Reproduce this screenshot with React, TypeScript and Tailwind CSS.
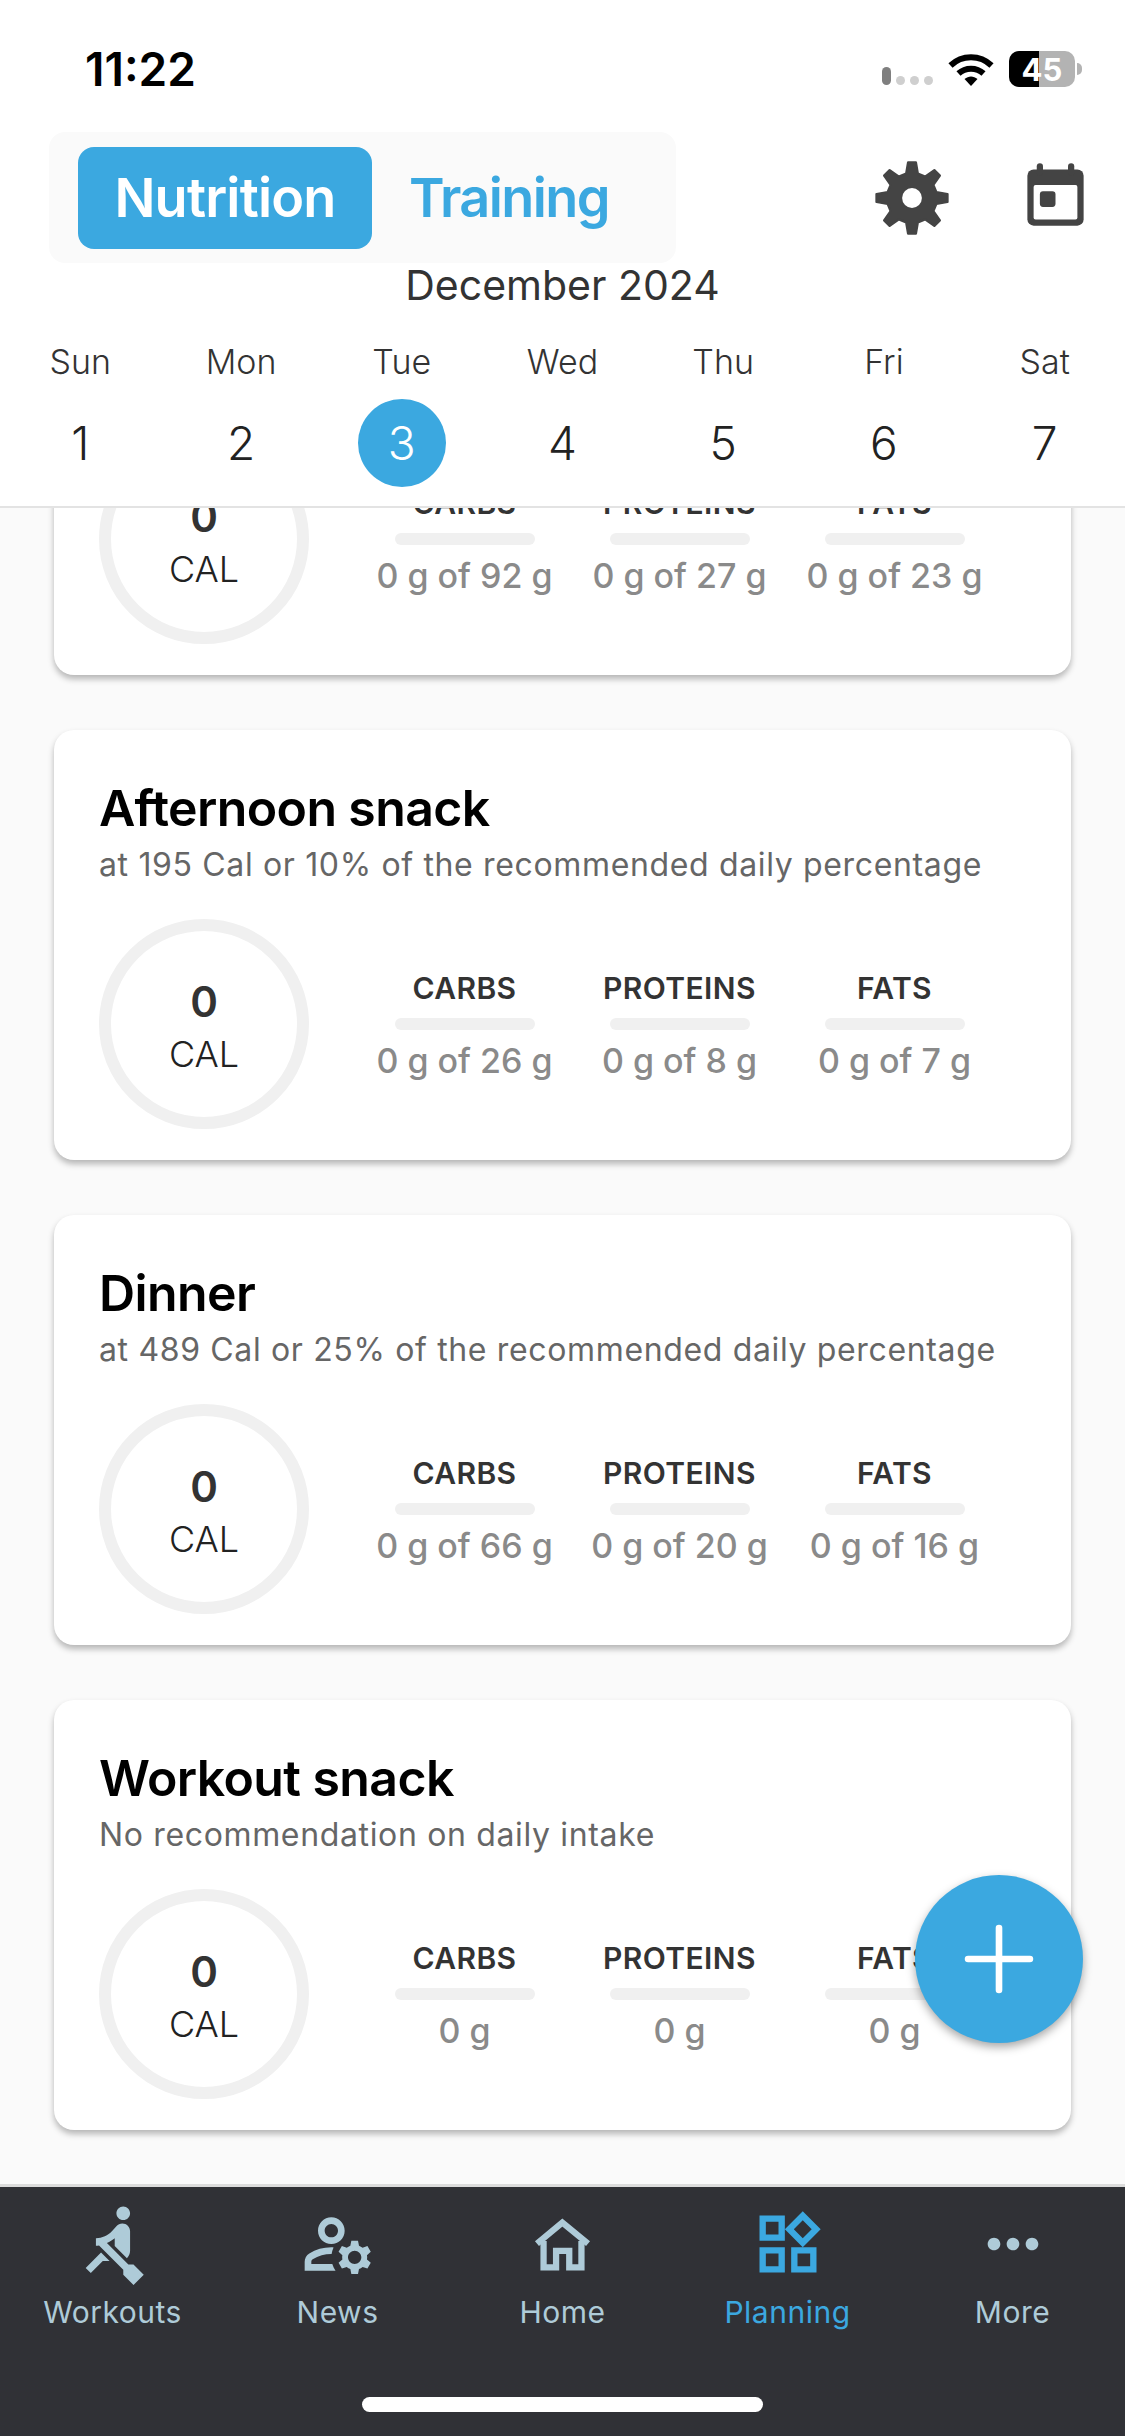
import React from 'react';
import { MdRowing, MdOutlineManageAccounts, MdOutlineWidgets, MdMoreHoriz } from 'react-icons/md';
import { Plus } from 'lucide-react';

const days = [
  { name: 'Sun', num: 1 },
  { name: 'Mon', num: 2 },
  { name: 'Tue', num: 3 },
  { name: 'Wed', num: 4 },
  { name: 'Thu', num: 5 },
  { name: 'Fri', num: 6 },
  { name: 'Sat', num: 7 },
];

// first card is scrolled under the header, its title is not visible
const meals = [
  { title: '', sub: '', macros: ['0 g of 92 g', '0 g of 27 g', '0 g of 23 g'] },
  { title: 'Afternoon snack', sub: 'at 195 Cal or 10% of the recommended daily percentage', macros: ['0 g of 26 g', '0 g of 8 g', '0 g of 7 g'] },
  { title: 'Dinner', sub: 'at 489 Cal or 25% of the recommended daily percentage', macros: ['0 g of 66 g', '0 g of 20 g', '0 g of 16 g'] },
  { title: 'Workout snack', sub: 'No recommendation on daily intake', macros: ['0 g', '0 g', '0 g'] },
];

const macroNames = ['CARBS', 'PROTEINS', 'FATS'];

// 8 toothed gear, outline built once from polar points
function gearPoints() {
  const pts: string[] = [];
  const teeth = 8;
  for (let i = 0; i < teeth; i++) {
    const a = (i * 2 * Math.PI) / teeth - Math.PI / 2;
    const step = (2 * Math.PI) / teeth;
    const add = (r: number, off: number) => {
      pts.push(`${(50 + r * Math.cos(a + off * step)).toFixed(2)},${(50 + r * Math.sin(a + off * step)).toFixed(2)}`);
    };
    add(33, -0.3);
    add(47, -0.14);
    add(47, 0.14);
    add(33, 0.3);
  }
  return pts.join(' ');
}

function GearIcon({ className }: { className?: string }) {
  return (
    <svg viewBox="0 0 100 100" className={className}>
      <polygon points={gearPoints()} fill="currentColor" stroke="currentColor" strokeWidth="3" strokeLinejoin="round" />
      <circle cx="50" cy="50" r="13" fill="white" />
    </svg>
  );
}

function CalendarIcon({ className }: { className?: string }) {
  return (
    <svg viewBox="0 0 24 24" className={className}>
      <rect x="3" y="3" width="18" height="18" rx="2" fill="currentColor" />
      <rect x="5" y="8" width="14" height="11" rx="0.6" fill="white" />
      <rect x="6" y="1" width="2" height="4" rx="1" fill="currentColor" />
      <rect x="16" y="1" width="2" height="4" rx="1" fill="currentColor" />
      <rect x="7" y="10" width="5" height="5" rx="1" fill="currentColor" />
    </svg>
  );
}

function HomeIcon({ className }: { className?: string }) {
  return (
    <svg viewBox="150 70 195 170" className={className} fill="none" stroke="currentColor" strokeWidth="19">
      <path d="M190 146 V226 H228 V176 H268 V226 H305 V146" />
      <path d="M170 154 L247 90 L325 154" />
    </svg>
  );
}

function WifiIcon({ className }: { className?: string }) {
  return (
    <svg viewBox="0 0 46 33" className={className} fill="none" stroke="currentColor" strokeWidth="6">
      <path d="M2.5 12.5 C14 1.5 32 1.5 43.5 12.5" />
      <path d="M10.5 20.5 C17.5 14 28.5 14 35.5 20.5" />
      <path d="M16.5 26 L23 33 L29.5 26 C25.5 22.6 20.5 22.6 16.5 26 Z" fill="currentColor" stroke="none" />
    </svg>
  );
}

const tabs = [
  { label: 'Workouts', Icon: MdRowing, size: 'h-[82px] w-[82px]', active: false },
  { label: 'News', Icon: MdOutlineManageAccounts, size: 'h-[80px] w-[80px]', active: false },
  { label: 'Home', Icon: HomeIcon, size: 'h-[56px] w-[65px] my-[12px]', active: false },
  { label: 'Planning', Icon: MdOutlineWidgets, size: 'h-[76px] w-[76px] my-[2px]', active: true },
  { label: 'More', Icon: MdMoreHoriz, size: 'h-[76px] w-[76px] my-[2px]', active: false },
];

function StatusBar() {
  return (
    <div className="flex h-[132px] items-start justify-between pl-[85px] pr-[43px] pt-[44px]">
      <span className="text-[46px] font-semibold leading-[50px] text-black">11:22</span>
      <div className="flex h-[50px] items-center">
        {/* signal */}
        <div className="mt-[14px] flex items-end gap-[5px]">
          <span className="h-[18px] w-[9px] rounded-full bg-[#7f7f7f]" />
          <span className="h-[9px] w-[9px] rounded-full bg-[#cfcfcf]" />
          <span className="h-[9px] w-[9px] rounded-full bg-[#cfcfcf]" />
          <span className="h-[9px] w-[9px] rounded-full bg-[#cfcfcf]" />
        </div>
        <WifiIcon className="ml-[15px] h-[33px] w-[46px] text-black" />
        {/* battery */}
        <div className="relative ml-[15px] flex h-[36px] w-[66px] items-center justify-center overflow-hidden rounded-[10px] bg-[#b3b3b3]">
          <span className="absolute inset-y-0 left-0 w-[30px] bg-black" />
          <span className="relative text-[31px] font-bold leading-none text-white">45</span>
        </div>
        <span className="ml-[2px] h-[12px] w-[5px] rounded-r-full bg-[#b3b3b3]" />
      </div>
    </div>
  );
}

function Header() {
  return (
    <header className="relative z-10 shrink-0 border-b-2 border-[#e3e3e3] bg-white">
      <StatusBar />
      <div className="flex h-[131px] items-center pl-[49px] pr-[32px]">
        <div className="flex h-[131px] w-[627px] items-center rounded-[16px] bg-[#fafafa] pl-[29px]">
          <div className="flex h-[102px] w-[294px] items-center justify-center rounded-[16px] bg-[#3ba8e0] text-[54px] font-semibold tracking-[-0.8px] text-white">
            Nutrition
          </div>
          <div className="ml-[37px] text-[54px] font-semibold tracking-[-1.6px] text-[#3ba8e0]">Training</div>
        </div>
        <div className="ml-auto flex items-center gap-[68px]">
          <GearIcon className="h-[76px] w-[76px] text-[#444444]" />
          <CalendarIcon className="h-[75px] w-[75px] text-[#444444]" />
        </div>
      </div>
      <div className="-mt-[4px] text-center text-[41px] leading-[52px] text-[#333333]">December 2024</div>
      <div className="mt-[29px] grid h-[166px] grid-cols-7">
        {days.map((d) => (
          <div key={d.name} className="flex flex-col items-center">
            <span className="text-[34px] font-light leading-[44px] text-[#333333]">{d.name}</span>
            <span
              className={`mt-[15px] flex h-[88px] w-[88px] items-center justify-center rounded-full text-[46px] font-light ${
                d.num === 3 ? 'bg-[#3ba8e0] text-white' : 'text-[#222222]'
              }`}
            >
              {d.num}
            </span>
          </div>
        ))}
      </div>
    </header>
  );
}

function MealCard({ meal }: { meal: (typeof meals)[number] }) {
  return (
    <div className="h-[430px] rounded-[20px] bg-white px-[45px] pt-[48px] shadow-[0_4px_6px_rgba(0,0,0,0.28)]">
      <h2 className="min-h-[60px] text-[50px] font-semibold leading-[60px] tracking-[-0.6px] text-black">{meal.title}</h2>
      <p className="mt-[4px] min-h-[46px] text-[32px] leading-[46px] tracking-[0.65px] text-[#666666]">{meal.sub}</p>
      <div className="mt-[31px] flex items-center">
        <div className="flex h-[210px] w-[210px] shrink-0 flex-col items-center justify-center rounded-full border-[12px] border-[#f0f0f0] pt-[6px]">
          <span className="text-[42px] font-semibold leading-[48px] text-[#333333]">0</span>
          <span className="mt-[5px] text-[36px] font-light leading-[46px] text-[#222222]">CAL</span>
        </div>
        <div className="ml-[48px] grid grid-cols-[215px_215px_215px] pt-[3px]">
          {macroNames.map((name, i) => (
            <div key={name} className="flex flex-col items-center">
              <span className="text-[30px] font-semibold leading-[40px] tracking-[0.4px] text-[#333333]">{name}</span>
              <span className="mt-[10.5px] h-[12px] w-[140px] rounded-full bg-[#f0f0f0]" />
              <span className="mt-[7.5px] text-[34px] font-medium leading-[46px] text-[#8a8a8a]">{meal.macros[i]}</span>
            </div>
          ))}
        </div>
      </div>
    </div>
  );
}

export default function App() {
  return (
    <div className="relative flex h-[2436px] w-[1125px] flex-col overflow-hidden bg-[#fafafa] font-['Inter',sans-serif]">
      <Header />
      <main className="min-h-0 flex-1 overflow-hidden">
        {/* list is scrolled, first card sits under the header */}
        <div className="-mt-[263px] flex flex-col gap-[55px] px-[54px]">
          {meals.map((m, i) => (
            <MealCard key={i} meal={m} />
          ))}
        </div>
      </main>
      <button className="absolute left-[915px] top-[1875px] flex h-[168px] w-[168px] items-center justify-center rounded-full bg-[#3ba8e0] shadow-[0_4px_10px_rgba(0,0,0,0.35)]">
        <Plus className="h-[106px] w-[106px] text-white" strokeWidth={1.5} />
      </button>
      <nav className="relative h-[252px] shrink-0 border-t-[3px] border-[#dcdcdc] bg-[#303136]">
        <div className="grid grid-cols-5 pt-[17px]">
          {tabs.map(({ label, Icon, size, active }) => (
            <div key={label} className={`flex flex-col items-center ${active ? 'text-[#3ba8e0]' : 'text-[#aecbd8]'}`}>
              <div className="flex h-[80px] items-center justify-center">
                <Icon className={size} />
              </div>
              <span className="mt-[8px] text-[30px] leading-[40px] tracking-[0.5px]">{label}</span>
            </div>
          ))}
        </div>
        <div className="absolute left-[362px] top-[210px] h-[15px] w-[401px] rounded-full bg-white" />
      </nav>
    </div>
  );
}
